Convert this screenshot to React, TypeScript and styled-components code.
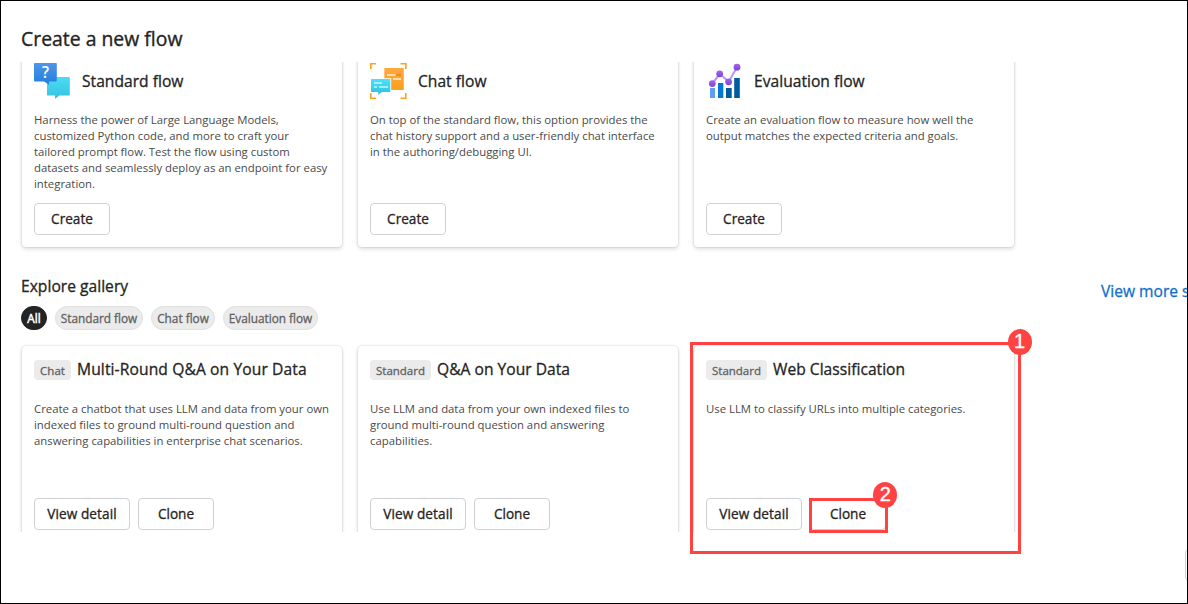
import React from 'react';
import styled, { createGlobalStyle } from 'styled-components';

const GlobalStyle = createGlobalStyle`
  *, *::before, *::after { box-sizing: border-box; }
  body { margin: 0; background: #fff; overflow: hidden; }
`;

const Frame = styled.div`
  position: relative;
  width: 1188px;
  height: 604px;
  padding-left: 20px;
  border: 1px solid #000;
  background: #fff;
  color: #242424;
  font-family: 'Open Sans', 'Noto Sans', sans-serif;
  overflow: hidden;
`;

const DialogTitle = styled.h1`
  height: 61px;
  margin: 0;
  padding-top: 24px;
  font-size: 19.4px;
  font-weight: 400;
  line-height: 28px;
  -webkit-text-stroke: 0.35px currentColor;
`;

const ScrollArea = styled.div`
  height: 470px;
  margin-left: -20px;
  padding-left: 20px;
  overflow: hidden;
`;

const CardRow = styled.div<{ $offset?: number }>`
  display: flex;
  gap: 16px;
  margin-top: ${(p) => p.$offset ?? 0}px;
`;

const Card = styled.article`
  display: flex;
  flex-direction: column;
  flex: none;
  width: 320px;
  height: 196px;
  padding: 12px;
  margin-left: 1px;
  margin-right: -1px;
  border-radius: 4px;
  background: #fff;
  box-shadow: 0 0 2px rgba(0, 0, 0, 0.2), 0 2px 4px rgba(0, 0, 0, 0.14);
`;

const FlowHeader = styled.header`
  display: flex;
  align-items: center;
  gap: 12px;
  height: 36px;
  margin-bottom: 13px;
`;

const SampleHeader = styled.header`
  display: flex;
  align-items: center;
  gap: 6px;
  height: 24px;
  margin-bottom: 19px;
`;

const CardTitle = styled.h2<{ $tracking?: number }>`
  margin: 0;
  font-size: 15.6px;
  font-weight: 400;
  line-height: 22px;
  letter-spacing: ${(p) => p.$tracking ?? 0.02}px;
  white-space: nowrap;
  -webkit-text-stroke: 0.3px currentColor;
`;

const SampleTitle = styled(CardTitle)`
  margin-top: -2px;
`;

const Description = styled.p`
  margin: 0;
  color: #4a4a4a;
  font-size: 11.35px;
  line-height: 16px;
  white-space: pre-line;
`;

const Actions = styled.div`
  display: flex;
  gap: 8px;
  margin-top: auto;
`;

const Button = styled.button<{ $width?: number }>`
  width: ${(p) => p.$width ?? 76}px;
  height: 32px;
  padding: 0 0 2px;
  border: 1px solid #d1d1d1;
  border-radius: 4px;
  background: #fff;
  color: #242424;
  font-family: inherit;
  font-size: 13.6px;
  font-weight: 400;
  letter-spacing: ${(p) => (p.$width ? 0.1 : 0)}px;
  white-space: nowrap;
  -webkit-text-stroke: 0.3px currentColor;
`;

const GalleryHeader = styled.div`
  display: grid;
  grid-template-columns: 1080px auto;
  height: 71px;
  margin-top: 28px;
  white-space: nowrap;
`;

const GalleryTitle = styled(CardTitle)`
  margin-bottom: 9px;
`;

const Pills = styled.div`
  display: flex;
  gap: 8px;
`;

const Pill = styled.span<{ $width: number; $active?: boolean }>`
  display: flex;
  align-items: center;
  justify-content: center;
  width: ${(p) => p.$width}px;
  height: 24px;
  border: 1px solid ${(p) => (p.$active ? '#242424' : '#e0e0e0')};
  border-radius: 12px;
  background: ${(p) => (p.$active ? '#242424' : '#ebebeb')};
  color: ${(p) => (p.$active ? '#fff' : '#616161')};
  font-size: 11.8px;
  -webkit-text-stroke: ${(p) => (p.$active ? 0.5 : 0.3)}px currentColor;
`;

const Tag = styled.span<{ $width: number }>`
  display: flex;
  align-items: center;
  justify-content: center;
  width: ${(p) => p.$width}px;
  height: 20px;
  padding-top: 1px;
  border-radius: 4px;
  background: #ebebeb;
  color: #616161;
  font-size: 11.5px;
  -webkit-text-stroke: 0.3px currentColor;
`;

const MoreLink = styled.a`
  padding-top: 5px;
  color: #1170c8;
  font-size: 15.6px;
  line-height: 22px;
  -webkit-text-stroke: 0.3px currentColor;
`;

const Footer = styled.footer`
  display: flex;
  width: 1400px;
  padding: 17px 0 0 1164px;
`;

const Highlight = styled.div<{ $x: number; $y: number; $w: number; $h: number }>`
  position: absolute;
  left: ${(p) => p.$x - 1}px;
  top: ${(p) => p.$y - 1}px;
  width: ${(p) => p.$w}px;
  height: ${(p) => p.$h}px;
  border: 3px solid #ff4343;
`;

const StepBadge = styled.span<{ $top: number; $right: number }>`
  position: absolute;
  top: ${(p) => p.$top}px;
  right: ${(p) => p.$right}px;
  width: 24px;
  height: 26px;
  border-radius: 50%;
  background: #ff4343;
  color: #fff;
  font: 20px/25px 'Liberation Sans', Arial, sans-serif;
  text-align: center;
  -webkit-text-stroke: 0.3px currentColor;
`;

const StandardIcon = () => (
  <svg width="36" height="36" viewBox="0 0 36 36">
    <defs>
      <linearGradient id="sBlue" x1="0" y1="0" x2="0" y2="1">
        <stop offset="0" stopColor="#5094ea" />
        <stop offset="1" stopColor="#1f7fdc" />
      </linearGradient>
      <linearGradient id="sCyan" x1="0" y1="0" x2="0" y2="1">
        <stop offset="0" stopColor="#4bdcf4" />
        <stop offset="1" stopColor="#35c2e0" />
      </linearGradient>
    </defs>
    <path d="M13.8 14H35a.8.8 0 0 1 .8.8v17a.8.8 0 0 1-.8.8h-9.6L21 36v-3.4h-7.2a.8.8 0 0 1-.8-.8v-17a.8.8 0 0 1 .8-.8Z" fill="url(#sCyan)" />
    <path d="M.8 0H22a.8.8 0 0 1 .8.8v16.8a.8.8 0 0 1-.8.8h-7v3.4l-4.8-3.4H.8a.8.8 0 0 1-.8-.8V.8A.8.8 0 0 1 .8 0Z" fill="url(#sBlue)" />
    <text x="11.5" y="14.8" textAnchor="middle" fill="#fff" fontFamily="Open Sans, sans-serif" fontWeight="600" fontSize="15.5">?</text>
  </svg>
);

const ChatIcon = () => (
  <svg width="37" height="36" viewBox="0 0 37 36">
    <defs>
      <linearGradient id="cOrange" x1="0" y1="0" x2="0" y2="1">
        <stop offset="0" stopColor="#ffa83f" />
        <stop offset="1" stopColor="#faa01c" />
      </linearGradient>
      <linearGradient id="cCyan" x1="0" y1="0" x2="0" y2="1">
        <stop offset="0" stopColor="#4be2fb" />
        <stop offset="1" stopColor="#2fc0df" />
      </linearGradient>
    </defs>
    <path d="M.8 6V.8H6M30.5.8h5.3V6M.8 30v5.2H6M30.5 35.2h5.3V30" fill="none" stroke="#faa21e" strokeWidth="1.6" />
    <rect x="14.3" y="5" width="19.5" height="22" rx=".6" fill="url(#cOrange)" />
    <path d="M17 12h8.7M23 16h8" stroke="#ffdcab" strokeWidth="1.8" />
    <path d="M26 12h5" stroke="#ef8a1c" strokeWidth="1.8" />
    <path d="M.4 15.2h20.8v14.6H.4Z" fill="#fff" />
    <path d="M1.5 16h18.8v13H12l-3.8 2.8V29H1V16.5a.5.5 0 0 1 .5-.5Z" fill="url(#cCyan)" />
    <path d="M4 20h8M4 24h3M9 24h9.2" stroke="#c3f5fd" strokeWidth="1.7" />
  </svg>
);

const EvaluationIcon = () => (
  <svg width="36" height="36" viewBox="0 0 36 36">
    <defs>
      <linearGradient id="ePurple" x1="0" y1="0" x2="0" y2="1">
        <stop offset="0" stopColor="#a666e6" />
        <stop offset="1" stopColor="#7f3fe0" />
      </linearGradient>
    </defs>
    <rect x="4" y="25" width="5" height="10" fill="#5ea0ef" />
    <rect x="12" y="20" width="5.3" height="15" fill="#0078d4" />
    <rect x="20" y="25" width="5.7" height="10" fill="#005ba1" />
    <rect x="28.2" y="15" width="5.6" height="20" fill="#005ba1" />
    <path d="M6.3 20.6 13.7 10.8 22.6 18.8 31 4.2" fill="none" stroke="#b796f9" strokeWidth="2" />
    {[[6.3, 20.6], [13.7, 10.8], [22.6, 18.8], [31, 4.2]].map(([x, y]) => (
      <circle key={x} cx={x} cy={y} r="3.4" fill="url(#ePurple)" />
    ))}
  </svg>
);

const IconSlot = styled.span`
  display: flex;
  width: 36px;
  height: 36px;

  svg {
    flex: none;
  }
`;

const flows = [
  {
    title: 'Standard flow',
    icon: <StandardIcon />,
    text: 'Harness the power of Large Language Models,\ncustomized Python code, and more to craft your\ntailored prompt flow. Test the flow using custom\ndatasets and seamlessly deploy as an endpoint for easy\nintegration.',
  },
  {
    title: 'Chat flow',
    icon: <ChatIcon />,
    text: 'On top of the standard flow, this option provides the\nchat history support and a user-friendly chat interface\nin the authoring/debugging UI.',
  },
  {
    title: 'Evaluation flow',
    icon: <EvaluationIcon />,
    text: 'Create an evaluation flow to measure how well the\noutput matches the expected criteria and goals.',
  },
];

const samples = [
  {
    tag: 'Chat',
    tagWidth: 37,
    title: 'Multi-Round Q&A on Your Data',
    tracking: 0.12,
    text: 'Create a chatbot that uses LLM and data from your own\nindexed files to ground multi-round question and\nanswering capabilities in enterprise chat scenarios.',
  },
  {
    tag: 'Standard',
    tagWidth: 61,
    title: 'Q&A on Your Data',
    text: 'Use LLM and data from your own indexed files to\nground multi-round question and answering\ncapabilities.',
  },
  {
    tag: 'Standard',
    tagWidth: 61,
    title: 'Web Classification',
    text: 'Use LLM to classify URLs into multiple categories.',
  },
];

export default function App() {
  return (
    <Frame>
      <GlobalStyle />
      <DialogTitle>Create a new flow</DialogTitle>
      <ScrollArea>
        <CardRow $offset={-11}>
          {flows.map((flow) => (
            <Card key={flow.title}>
              <FlowHeader>
                <IconSlot>{flow.icon}</IconSlot>
                <CardTitle>{flow.title}</CardTitle>
              </FlowHeader>
              <Description>{flow.text}</Description>
              <Actions>
                <Button>Create</Button>
              </Actions>
            </Card>
          ))}
        </CardRow>
        <GalleryHeader>
          <div>
            <GalleryTitle>Explore gallery</GalleryTitle>
            <Pills>
              <Pill $width={26} $active>All</Pill>
              <Pill $width={88}>Standard flow</Pill>
              <Pill $width={64}>Chat flow</Pill>
              <Pill $width={95}>Evaluation flow</Pill>
            </Pills>
          </div>
          <MoreLink>View more samples</MoreLink>
        </GalleryHeader>
        <CardRow>
          {samples.map((sample) => (
            <Card key={sample.title}>
              <SampleHeader>
                <Tag $width={sample.tagWidth}>{sample.tag}</Tag>
                <SampleTitle $tracking={sample.tracking}>{sample.title}</SampleTitle>
              </SampleHeader>
              <Description>{sample.text}</Description>
              <Actions>
                <Button $width={96}>View detail</Button>
                <Button>Clone</Button>
              </Actions>
            </Card>
          ))}
        </CardRow>
      </ScrollArea>
      <Footer>
        <Button $width={96} aria-label="Close" />
      </Footer>
      <Highlight $x={690} $y={342} $w={331} $h={212}>
        <StepBadge $top={-16} $right={-13.5}>1</StepBadge>
      </Highlight>
      <Highlight $x={809} $y={498} $w={79} $h={35}>
        <StepBadge $top={-19} $right={-12.3}>2</StepBadge>
      </Highlight>
    </Frame>
  );
}
